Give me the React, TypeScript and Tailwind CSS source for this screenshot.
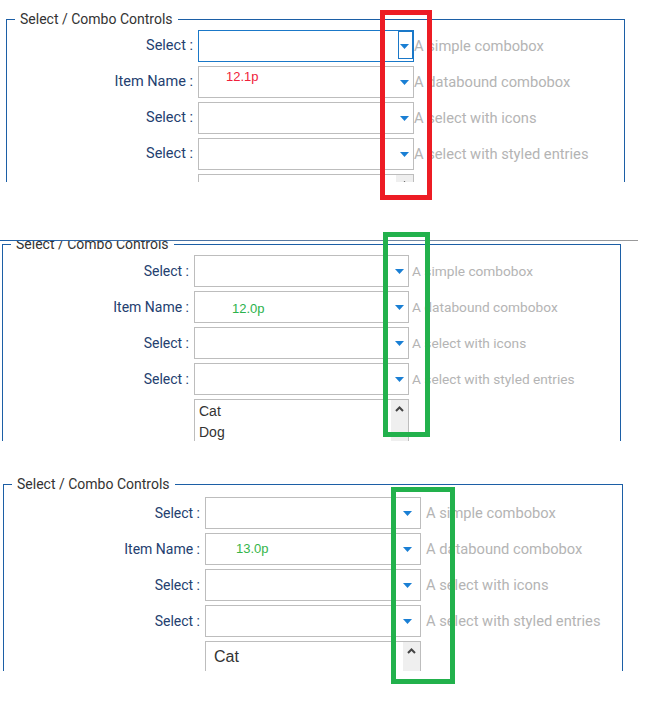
import React from 'react';

type PanelCfg = {
  labelW: number;
  inputW: number;
  descGap: number;
  arrowRight: number;
  topPad: string;
  labelSize: string;
  descSize: string;
  valuePad: string;
  value: string;
  valueColor: string;
  listText: string;
  listPad: string;
  focused?: boolean;
};

const Arrow = () => (
  <svg width="9" height="5" viewBox="0 0 9 5" className="block">
    <polygon points="0,0 9,0 4.5,5" fill="#1a7fd4" />
  </svg>
);

const Chevron = () => (
  <svg width="9" height="6" viewBox="0 0 9 6" className="block">
    <path d="M1 5 L4.5 1.5 L8 5" stroke="#444" strokeWidth="2" fill="none" />
  </svg>
);

const rows = [
  { label: 'Select :', desc: 'A simple combobox' },
  { label: 'Item Name :', desc: 'A databound combobox' },
  { label: 'Select :', desc: 'A select with icons' },
  { label: 'Select :', desc: 'A select with styled entries' },
];

const Panel: React.FC<{ cfg: PanelCfg }> = ({ cfg }) => (
  <fieldset className={`border border-[#1c5fa6] h-[260px] font-['Roboto',sans-serif] ${cfg.topPad}`}>
    <legend className="ml-[8px] px-[5px] text-[14px] leading-[16px] text-[#333]">Select / Combo Controls</legend>
    <div className="flex flex-col gap-[4px]">
      {rows.map((r, i) => (
        <div key={i} className="flex items-center h-[32px]">
          <div style={{ width: cfg.labelW }} className={`text-right text-[#24406f] whitespace-nowrap ${cfg.labelSize}`}>
            {r.label}
          </div>
          <div style={{ width: cfg.inputW }} className={`relative ml-[5px] h-[32px] border ${cfg.focused && i === 0 ? 'border-[#1a78c8]' : 'border-[#bdbdbd]'}`}>
            {i === 1 && (
              <span className={`absolute top-0 left-0 font-['Liberation_Sans',Arial,sans-serif] text-[13px] leading-[16px] ${cfg.valuePad}`} style={{ color: cfg.valueColor }}>
                {cfg.value}
              </span>
            )}
            {cfg.focused && i === 0 && (
              <span className="absolute right-0 top-0 w-[15px] h-[28px] border border-[#1a78c8]" />
            )}
            <span className="absolute top-[13px]" style={{ right: cfg.arrowRight }}>
              <Arrow />
            </span>
          </div>
          <div style={{ marginLeft: cfg.descGap }} className={`${cfg.descSize} text-[#b4b4b4] whitespace-nowrap`}>
            {r.desc}
          </div>
        </div>
      ))}
      <div className="flex h-[60px]">
        <div style={{ width: cfg.labelW }} />
        <div style={{ width: cfg.inputW }} className="ml-[5px] h-[60px] border border-[#bdbdbd] flex">
          <div className={`flex-1 font-['Liberation_Sans',Arial,sans-serif] text-[#333] ${cfg.listText} ${cfg.listPad}`}>
            <div>Cat</div>
            <div>Dog</div>
          </div>
          <div className="w-[17px] bg-[#efefef] flex justify-center pt-[6px]">
            <Chevron />
          </div>
        </div>
      </div>
    </div>
  </fieldset>
);

export default function App() {
  return (
    <div className="relative w-[654px] h-[723px] bg-white flex flex-col">
      <div className="h-[182px] overflow-hidden pt-[11px] pl-[6px]">
        <div className="w-[619px]">
          <Panel
            cfg={{
              labelW: 186,
              inputW: 216,
              descGap: 0,
              arrowRight: 4,
              topPad: 'pt-[3px]',
              labelSize: 'text-[14.5px]',
              descSize: 'text-[14.7px]',
              valuePad: 'pl-[27px] pt-[2px]',
              value: '12.1p',
              valueColor: '#f0213a',
              listText: 'text-[14px] leading-[21px]',
              listPad: 'pl-[4px] pt-[10px]',
              focused: true,
            }}
          />
        </div>
      </div>

      <div className="mt-[58px] h-px w-[638px] bg-gradient-to-r from-[#1c5fa6] to-[#9a9a9a]" />

      <div className="h-[200px] overflow-hidden pl-[2px]">
        <div className="w-[619px] -mt-[5px]">
          <Panel
            cfg={{
              labelW: 186,
              inputW: 215,
              descGap: 3,
              arrowRight: 4,
              topPad: 'pt-[3px]',
              labelSize: 'text-[14px]',
              descSize: 'text-[13.7px]',
              valuePad: 'pl-[37px] pt-[9px]',
              value: '12.0p',
              valueColor: '#2bb24c',
              listText: 'text-[14px] leading-[21px]',
              listPad: 'pl-[4px] pt-[1px]',
            }}
          />
        </div>
      </div>

      <div className="mt-[19px] h-[211px] overflow-hidden pt-[16px] pl-[3px]">
        <div className="w-[620px]">
          <Panel
            cfg={{
              labelW: 196,
              inputW: 216,
              descGap: 5,
              arrowRight: 8,
              topPad: 'pt-[5px]',
              labelSize: 'text-[14px]',
              descSize: 'text-[14.7px]',
              valuePad: 'pl-[30px] pt-[7px]',
              value: '13.0p',
              valueColor: '#35b54a',
              listText: 'text-[16px] leading-[28px]',
              listPad: 'pl-[8px] pt-[1px]',
            }}
          />
        </div>
      </div>

      <div className="absolute left-[380px] top-[10px] w-[52px] h-[190px] border-[5px] border-[#ed1c24]" />
      <div className="absolute left-[383px] top-[232px] w-[47px] h-[205px] border-[5px] border-[#22b14c]" />
      <div className="absolute left-[391px] top-[487px] w-[64px] h-[197px] border-[5px] border-[#22b14c]" />
    </div>
  );
}
